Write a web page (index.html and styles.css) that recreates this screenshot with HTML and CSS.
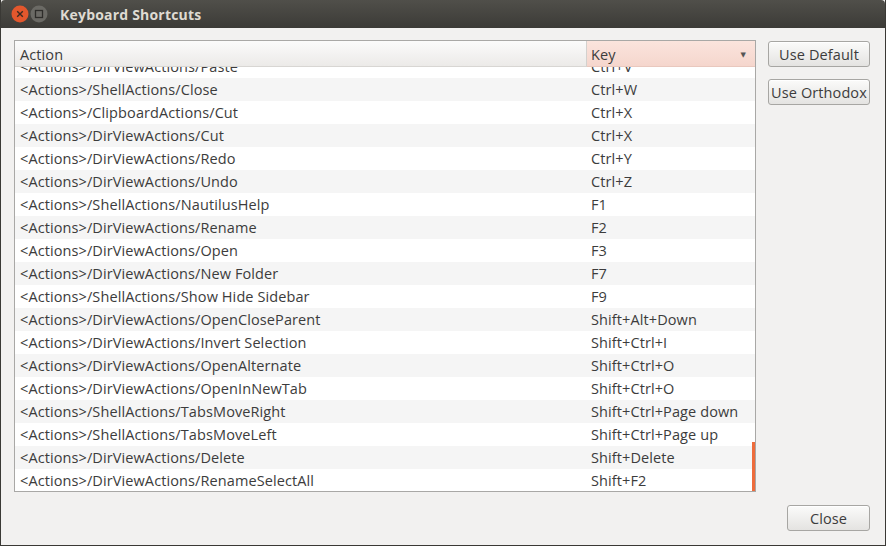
FILE: index.html
```html
<!DOCTYPE html>
<html>
<head>
<meta charset="utf-8">
<link rel="stylesheet" href="styles.css">
</head>
<body>
<div class="window">
  <div class="titlebar">
    <div class="wbtn close-btn">
      <svg width="18" height="18" viewBox="0 0 18 18"><circle cx="9" cy="9" r="8.5" fill="#e2572d"/><path d="M6.2 6.2 L11.8 11.8 M11.8 6.2 L6.2 11.8" stroke="#3a2a22" stroke-width="1.4"/></svg>
    </div>
    <div class="wbtn max-btn">
      <svg width="18" height="18" viewBox="0 0 18 18"><circle cx="9" cy="9" r="8.5" fill="#6b6a65"/><rect x="5.5" y="5.5" width="7" height="7" fill="none" stroke="#2e2d2a" stroke-width="1.3"/></svg>
    </div>
    <div class="title">Keyboard Shortcuts</div>
  </div>
  <div class="content">
    <div class="main">
      <div class="tree">
        <div class="thead">
          <div class="th th-action">Action</div>
          <div class="th th-key"><span>Key</span><span class="arrow">▼</span></div>
        </div>
        <div class="tbody">
          <div class="rows">
            <div class="row"><div class="c1">&lt;Actions&gt;/DirViewActions/Paste</div><div class="c2">Ctrl+V</div></div>
            <div class="row alt"><div class="c1">&lt;Actions&gt;/ShellActions/Close</div><div class="c2">Ctrl+W</div></div>
            <div class="row"><div class="c1">&lt;Actions&gt;/ClipboardActions/Cut</div><div class="c2">Ctrl+X</div></div>
            <div class="row alt"><div class="c1">&lt;Actions&gt;/DirViewActions/Cut</div><div class="c2">Ctrl+X</div></div>
            <div class="row"><div class="c1">&lt;Actions&gt;/DirViewActions/Redo</div><div class="c2">Ctrl+Y</div></div>
            <div class="row alt"><div class="c1">&lt;Actions&gt;/DirViewActions/Undo</div><div class="c2">Ctrl+Z</div></div>
            <div class="row"><div class="c1">&lt;Actions&gt;/ShellActions/NautilusHelp</div><div class="c2">F1</div></div>
            <div class="row alt"><div class="c1">&lt;Actions&gt;/DirViewActions/Rename</div><div class="c2">F2</div></div>
            <div class="row"><div class="c1">&lt;Actions&gt;/DirViewActions/Open</div><div class="c2">F3</div></div>
            <div class="row alt"><div class="c1">&lt;Actions&gt;/DirViewActions/New Folder</div><div class="c2">F7</div></div>
            <div class="row"><div class="c1">&lt;Actions&gt;/ShellActions/Show Hide Sidebar</div><div class="c2">F9</div></div>
            <div class="row alt"><div class="c1">&lt;Actions&gt;/DirViewActions/OpenCloseParent</div><div class="c2">Shift+Alt+Down</div></div>
            <div class="row"><div class="c1">&lt;Actions&gt;/DirViewActions/Invert Selection</div><div class="c2">Shift+Ctrl+I</div></div>
            <div class="row alt"><div class="c1">&lt;Actions&gt;/DirViewActions/OpenAlternate</div><div class="c2">Shift+Ctrl+O</div></div>
            <div class="row"><div class="c1">&lt;Actions&gt;/DirViewActions/OpenInNewTab</div><div class="c2">Shift+Ctrl+O</div></div>
            <div class="row alt"><div class="c1">&lt;Actions&gt;/ShellActions/TabsMoveRight</div><div class="c2">Shift+Ctrl+Page down</div></div>
            <div class="row"><div class="c1">&lt;Actions&gt;/ShellActions/TabsMoveLeft</div><div class="c2">Shift+Ctrl+Page up</div></div>
            <div class="row alt"><div class="c1">&lt;Actions&gt;/DirViewActions/Delete</div><div class="c2">Shift+Delete</div></div>
            <div class="row"><div class="c1">&lt;Actions&gt;/DirViewActions/RenameSelectAll</div><div class="c2">Shift+F2</div></div>
          </div>
          <div class="scroll-ind"></div>
        </div>
      </div>
      <div class="side">
        <button class="btn btn-side">Use Default</button>
        <button class="btn btn-side">Use Orthodox</button>
      </div>
    </div>
    <div class="footer">
      <button class="btn btn-close">Close</button>
    </div>
  </div>
</div>
</body>
</html>
```

FILE: styles.css
```css
* { box-sizing: border-box; }
html, body { margin: 0; padding: 0; }
body {
  width: 886px;
  height: 546px;
  overflow: hidden;
  background: #f2f1f0;
  font-family: "Open Sans", "DejaVu Sans", sans-serif;
  font-size: 14.5px;
  letter-spacing: 0.1px;
  color: #3c3c3c;
}
.window {
  width: 886px;
  height: 546px;
  border-left: 1px solid #3a3935;
  border-right: 1px solid #3a3935;
  border-bottom: 1px solid #3a3935;
  display: flex;
  flex-direction: column;
  background: #f2f1f0;
}
.titlebar {
  height: 28px;
  flex: none;
  background: linear-gradient(#504f4a, #3c3b37);
  display: flex;
  align-items: center;
  padding-left: 10px;
  border-top-left-radius: 4px;
  border-top-right-radius: 4px;
}
.wbtn { width: 18px; height: 18px; margin-right: 1px; display: flex; }
.title {
  margin-left: 11px;
  color: #dfdbd2;
  font-weight: bold;
  font-size: 14px;
  letter-spacing: 0.2px;
}
.content {
  flex: 1;
  display: flex;
  flex-direction: column;
  padding: 12px 15px 14px 13px;
}
.main {
  display: flex;
  gap: 12px;
}
.tree {
  width: 743px;
  height: 452px;
  border: 1px solid #a9a8a6;
  background: #ffffff;
  display: flex;
  flex-direction: column;
}
.thead {
  height: 26px;
  flex: none;
  display: flex;
}
.th {
  display: flex;
  align-items: center;
  height: 26px;
  padding-top: 1px;
}
.th-action {
  width: 572px;
  padding-left: 5px;
  background: linear-gradient(#fbfbfb, #eceae8);
  border-right: 1px solid #d3d1ce;
  border-bottom: 1px solid #d8d6d3;
}
.th-key {
  flex: 1;
  padding-left: 4px;
  padding-right: 9px;
  justify-content: space-between;
  background: linear-gradient(#fbe4dd, #f5d6cd);
  border-bottom: 1px solid #e9c8be;
}
.arrow { font-size: 7px; color: #555; }
.tbody {
  flex: 1;
  position: relative;
  overflow: hidden;
}
.rows { margin-top: -12px; }
.row {
  height: 23px;
  display: flex;
  align-items: center;
  background: #ffffff;
  padding-bottom: 1px;
}
.row.alt { background: #f5f5f5; }
.c1 { width: 572px; padding-left: 5px; white-space: nowrap; }
.c2 { flex: 1; padding-left: 4px; white-space: nowrap; }
.scroll-ind {
  position: absolute;
  right: 0;
  bottom: 0;
  width: 3px;
  height: 49px;
  background: #ee6c3c;
}
.side {
  display: flex;
  flex-direction: column;
  gap: 12px;
  padding-top: 1px;
}
.btn {
  font-family: inherit;
  font-size: 14.5px;
  letter-spacing: 0.1px;
  color: #3c3c3c;
  border: 1px solid #a7a6a3;
  border-radius: 3px;
  background: linear-gradient(#fbfbfa, #e4e3e1);
  height: 26px;
  padding: 0;
  margin: 0;
  box-shadow: inset 0 1px 0 #ffffff;
}
.btn-side { width: 102px; }
.footer {
  margin-top: auto;
  display: flex;
  justify-content: flex-end;
}
.btn-close { width: 83px; }
```
